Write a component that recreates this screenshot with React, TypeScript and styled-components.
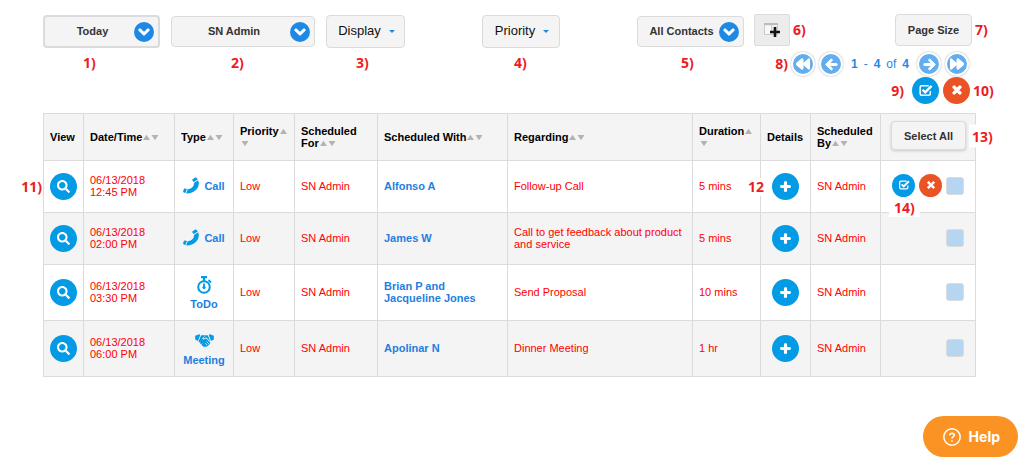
import React from 'react';
import styled, { createGlobalStyle } from 'styled-components';
import {
  FaArrowLeft,
  FaArrowRight,
  FaBackward,
  FaChevronDown,
  FaForward,
  FaPlus,
  FaSearch,
  FaTimes,
} from 'react-icons/fa';

const GlobalStyle = createGlobalStyle`
  *, *::before, *::after { box-sizing: border-box; }
  body {
    margin: 0;
    background: #fff;
    color: #000;
    font: 11px/12px "Liberation Sans", Arial, sans-serif;
  }
  button, select, input { font: inherit; margin: 0; }
  button { cursor: pointer; }
`;

const Page = styled.main`
  padding: 14px 42px 90px 43px;
`;

const Header = styled.header`
  display: flex;
  justify-content: space-between;
  align-items: flex-start;
  gap: 10px;
`;

const Filters = styled.div`
  display: flex;
  gap: 77px;
  padding-top: 1px;
`;

const FilterGroup = styled.div`
  display: flex;
  gap: 11px;
`;

const Slot = styled.div`
  display: flex;
  flex-direction: column;
  gap: 6px;
`;

const SlotControl = styled.div`
  display: flex;
  align-items: center;
  height: 33px;
`;

const Note = styled.span<{ $indent?: number }>`
  padding-left: ${(p) => p.$indent ?? 0}px;
  color: #ed1c24;
  font: bold 14px/18px "Open Sans", "Noto Sans", sans-serif;
  white-space: nowrap;
`;

const SideNote = styled(Note)<{ $side: 'left' | 'right'; $far?: boolean }>`
  position: absolute;
  top: 50%;
  ${(p) => (p.$side === 'left' ? 'right' : 'left')}: calc(100% + ${(p) => (p.$far ? 8 : 3)}px);
  transform: translateY(-50%);
  background: #fff;
`;

const Anchor = styled.span`
  position: relative;
  display: inline-flex;
`;

const SelectBox = styled.label<{ $width: number; $active?: boolean }>`
  position: relative;
  display: block;
  width: ${(p) => p.$width}px;
  height: ${(p) => (p.$active ? 33 : 31)}px;
  border: ${(p) => (p.$active ? 2 : 1)}px solid #dbdbdb;
  border-radius: 4px;
  background: #f4f4f4;
`;

const Select = styled.select`
  display: block;
  appearance: none;
  width: 100%;
  height: 100%;
  padding: 0 26px 2px 8px;
  border: 0;
  background: transparent;
  color: #333;
  font-weight: bold;
  text-align: center;
  text-align-last: center;
`;

const SelectArrow = styled.span`
  position: absolute;
  top: 50%;
  right: 4px;
  display: flex;
  align-items: center;
  justify-content: center;
  width: 20px;
  height: 20px;
  transform: translateY(-50%);
  border-radius: 50%;
  background: #1e88e5;
  color: #fff;
  pointer-events: none;
  svg { stroke: currentColor; stroke-width: 50px; }
`;

const ToolButton = styled.button<{ $width: number }>`
  display: flex;
  align-items: center;
  justify-content: center;
  gap: 8px;
  width: ${(p) => p.$width}px;
  height: 32px;
  padding: 0;
  border: 1px solid #dbdbdb;
  border-radius: 4px;
  background: #f4f4f4;
  color: #333;
  font-weight: bold;
`;

const MenuButton = styled(ToolButton)`
  height: 33px;
  padding: 0 0 1px 2px;
  color: #111;
  font-size: 13px;
  font-weight: normal;
`;

const Caret = styled.span`
  border: 3px solid transparent;
  border-top-color: #1e88e5;
  border-bottom: 0;
`;

const ColumnButton = styled(ToolButton)`
  border-radius: 2px;
  background: #ececec;
`;

const SelectAllButton = styled(ToolButton)`
  height: 29px;
  box-shadow: 0 1px 3px rgba(0, 0, 0, 0.18);
`;

const Side = styled.div`
  display: flex;
  flex-direction: column;
  align-items: flex-end;
  width: 222px;
  padding-right: 4px;
`;

const SideTop = styled.div`
  display: flex;
  align-items: center;
  justify-content: space-between;
  width: 100%;
`;

const Pager = styled.nav`
  position: relative;
  display: flex;
  align-items: center;
  gap: 4px;
  margin: 6px 3px 0 0;
`;

const PagerButton = styled.button`
  display: flex;
  align-items: center;
  justify-content: center;
  width: 24px;
  height: 24px;
  padding: 0;
  border: 2px solid #fff;
  border-radius: 50%;
  background: #64aeee;
  color: #fff;
  box-shadow: 0 0 2px rgba(0, 0, 0, 0.35);
  svg { flex: none; stroke: currentColor; stroke-width: 36px; }
`;

const PagerText = styled.span`
  display: flex;
  justify-content: space-between;
  width: 58px;
  margin: 0 4px;
  color: #1e88e5;
  font-size: 12px;
`;

const Actions = styled.div`
  display: flex;
  gap: 4px;
  margin: 1px 2px 9px 0;
`;

const RoundButton = styled.button<{ $color?: string; $size?: number }>`
  display: inline-flex;
  align-items: center;
  justify-content: center;
  width: ${(p) => p.$size ?? 27}px;
  height: ${(p) => p.$size ?? 27}px;
  padding: 0 0 1px;
  border: 0;
  border-radius: 50%;
  background: ${(p) => p.$color ?? '#039be5'};
  color: #fff;
`;

const HeavyIcon = styled.span`
  display: flex;
  svg { overflow: visible; stroke: currentColor; stroke-width: 50px; }
`;

const Table = styled.table`
  width: 100%;
  table-layout: fixed;
  border-collapse: collapse;
`;

const Row = styled.tr<{ $height: number; $shaded?: boolean }>`
  height: ${(p) => p.$height}px;
  background: ${(p) => (p.$shaded ? '#f4f4f4' : '#fff')};
`;

const HeadCell = styled.th`
  position: relative;
  padding: 0 6px;
  border: 1px solid #dbdbdb;
  text-align: left;
`;

const ToolsHeadCell = styled(HeadCell)`
  padding: 0 9px 3px 10px;
`;

const Cell = styled.td`
  position: relative;
  padding: 0 6px 2px;
  border: 1px solid #dbdbdb;
  color: #f00;
`;

const IconCell = styled(Cell)`
  padding: 0 6px;
  text-align: center;
`;

const ItemLink = styled.a`
  color: #1e7fdf;
  font-weight: bold;
  text-decoration: none;
`;

const TypeLink = styled(ItemLink)<{ $stacked: boolean }>`
  display: flex;
  flex-direction: ${(p) => (p.$stacked ? 'column' : 'row')};
  align-items: center;
  justify-content: center;
  gap: 4px;
  padding-top: ${(p) => (p.$stacked ? 2 : 0)}px;
  svg { color: #039be5; }
`;

const RowTools = styled.div`
  display: flex;
  align-items: center;
  justify-content: flex-end;
  gap: 4px;
  padding-right: 5px;
`;

const Tick = styled.input`
  appearance: none;
  width: 18px;
  height: 18px;
  border: 1px solid #dbdbdb;
  border-radius: 3px;
  background: #b6d5f1;
`;

const UnderNote = styled(Note)`
  position: absolute;
  top: calc(100% + 2px);
  left: -3px;
  padding: 0 5px;
  background: #fff;
`;

const HeadNote = styled(SideNote)`
  padding: 0 4px 0 3px;
  line-height: 23px;
`;

const HelpButton = styled.button`
  position: fixed;
  right: 0;
  bottom: 9px;
  display: flex;
  align-items: center;
  gap: 7px;
  height: 41px;
  padding: 0 18px 0 19px;
  border: 0;
  border-radius: 21px;
  background: #fb9324;
  color: #fff;
  font: bold 14px/20px Inter, sans-serif;
`;

const SortSvg = styled.svg`
  fill: #b3b3b3;
`;

const Sort = () => (
  <>
    <SortSvg width="8" height="7" viewBox="0 0 8 7" aria-hidden="true">
      <path d="M1 6 4.500 .800 8 6z" />
    </SortSvg>
    <wbr />
    <SortSvg width="10" height="7" viewBox="0 0 10 7" aria-hidden="true">
      <path d="M1.500 1h7L5 6.300z" />
    </SortSvg>
  </>
);

const CheckBoxIcon = ({ size = 14 }: { size?: number }) => (
  <svg width={size} height={size} viewBox="0 0 14 14" fill="none" stroke="#fff" aria-hidden="true">
    <path d="M11.500 7.500v2.600q0 1.400-1.400 1.400H3.400Q2 11.500 2 10.100V3.900q0-1.400 1.400-1.400H10" strokeWidth="1.400" />
    <path d="m4.300 6.300 2.400 2.400 6-6" strokeWidth="2.300" />
  </svg>
);

const PhoneIcon = () => (
  <svg width="17" height="17" viewBox="0 0 17 17" fill="currentColor" aria-hidden="true">
    <path d="M9.300 2.500 12.200.600q1-.600 1.600.400l.9 1.500-4 2.600-1.200-1.500q-.6-.7-.2-1.100z" />
    <path d="m11.200 5.800 4-2.500q1.500 3 .100 6.300-2.300 4.900-7.800 6.400-2.300.6-4.300.3l1.500-4.100q2.300.1 4.100-1.400 2.300-1.900 2.400-5z" />
    <path d="m3.900 12.100-1.500 4-1.600-.5q-.9-.4-.6-1.500l.7-2.100q.3-.8 1.100-.5z" />
  </svg>
);

const StopwatchIcon = () => (
  <svg width="16" height="18" viewBox="0 0 16 18" fill="none" stroke="currentColor" aria-hidden="true">
    <circle cx="8" cy="11" r="5.800" strokeWidth="2" />
    <path d="M5 1.200h6M8 1v4.500" strokeWidth="2.200" />
    <path d="M8 7.500v4M12.500 4l2.500 2.500" strokeWidth="1.800" />
    <circle cx="8" cy="11.500" r="1.200" fill="currentColor" />
  </svg>
);

const HandshakeIcon = () => (
  <svg width="19" height="18" viewBox="0 -2 19 18" fill="currentColor" aria-hidden="true">
    <path d="M.2 1.800 4 .3 5.300 1 2.900 6.900.2 5.500z" />
    <path d="M18.800 1.800 15 .3 13.700 1l2.400 5.900 2.700-1.400z" />
    <path d="M6 1.500 8.800 1 10 1.700 7.200 4.200q.8 1.900 2.700.8l1-.7 4.300 4.200q.4 1-.6 1.300.1 1-1 1.200-.1 1-1.200 1-.4 1.100-1.500.6L9.700 13 7.500 12 3.500 7.500z" />
    <path d="m10.700 1 2.200.4 2.400 6-4.200-4.200-1.900 1.200q-.5.200-.8-.3z" />
    <path d="m10.200 9.300 2 1.900M11.700 7.700l2.100 2.100M4 9.300l1.300-1.500M5.700 11l1.400-1.500" stroke="#f4f4f4" strokeWidth=".8" />
  </svg>
);

const AddColumnIcon = () => (
  <svg width="18" height="17" viewBox="0 0 18 17" fill="none" aria-hidden="true">
    <path d="M1.500 1.500h13v11h-13zM8.500 3v9" stroke="#c9c9c9" />
    <path d="M1 2h14" stroke="#bdbdbd" strokeWidth="2" />
    <path d="M2 4h6v8H2z" fill="#f8f8f8" />
    <path d="M12 5v10M7 10h10" stroke="#111" strokeWidth="2.600" />
  </svg>
);

const HelpIcon = () => (
  <svg width="20" height="20" viewBox="0 0 20 20" fill="none" stroke="#fff" aria-hidden="true">
    <circle cx="10" cy="10" r="8.200" strokeWidth="1.500" />
    <path d="M7.800 8.200q.1-2 2.200-2 2.200.1 2.200 1.900 0 1-1.100 1.700Q10 10.500 10 11.600" strokeWidth="1.600" />
    <circle cx="10" cy="14" r=".6" fill="#fff" strokeWidth=".6" />
  </svg>
);

type Kind = 'Call' | 'ToDo' | 'Meeting';

const kindIcons: Record<Kind, React.ReactNode> = {
  Call: <PhoneIcon />,
  ToDo: <StopwatchIcon />,
  Meeting: <HandshakeIcon />,
};

interface Activity {
  date: string;
  time: string;
  kind: Kind;
  contact: string;
  regarding: string;
  duration: string;
}

const activities: Activity[] = [
  { date: '06/13/2018', time: '12:45 PM', kind: 'Call', contact: 'Alfonso A', regarding: 'Follow-up Call', duration: '5 mins' },
  { date: '06/13/2018', time: '02:00 PM', kind: 'Call', contact: 'James W', regarding: 'Call to get feedback about product and service', duration: '5 mins' },
  { date: '06/13/2018', time: '03:30 PM', kind: 'ToDo', contact: 'Brian P and Jacqueline Jones', regarding: 'Send Proposal', duration: '10 mins' },
  { date: '06/13/2018', time: '06:00 PM', kind: 'Meeting', contact: 'Apolinar N', regarding: 'Dinner Meeting', duration: '1 hr' },
];

const columns: { label: string; width?: number; sortable?: boolean }[] = [
  { label: 'View', width: 40 },
  { label: 'Date/Time', width: 91, sortable: true },
  { label: 'Type', width: 59, sortable: true },
  { label: 'Priority', width: 61, sortable: true },
  { label: 'Scheduled For', width: 83, sortable: true },
  { label: 'Scheduled With', width: 130, sortable: true },
  { label: 'Regarding', sortable: true },
  { label: 'Duration', width: 68, sortable: true },
  { label: 'Details', width: 50 },
  { label: 'Scheduled By', width: 70, sortable: true },
];

const Dropdown = ({ label, value, width, active }: { label: string; value: string; width: number; active?: boolean }) => (
  <SelectBox $width={width} $active={active}>
    <Select aria-label={label} defaultValue={value}>
      <option>{value}</option>
    </Select>
    <SelectArrow>
      <FaChevronDown size={12} />
    </SelectArrow>
  </SelectBox>
);

export default function App() {
  return (
    <Page>
      <GlobalStyle />
      <Header>
        <Filters>
          <FilterGroup>
            <Slot>
              <SlotControl><Dropdown label="Period" value="Today" width={117} active /></SlotControl>
              <Note $indent={40}>1)</Note>
            </Slot>
            <Slot>
              <SlotControl><Dropdown label="User" value="SN Admin" width={144} /></SlotControl>
              <Note $indent={60}>2)</Note>
            </Slot>
            <Slot>
              <SlotControl>
                <MenuButton $width={79} aria-haspopup="menu">Display<Caret /></MenuButton>
              </SlotControl>
              <Note $indent={30}>3)</Note>
            </Slot>
          </FilterGroup>
          <Slot>
            <SlotControl>
              <MenuButton $width={78} aria-haspopup="menu">Priority<Caret /></MenuButton>
            </SlotControl>
            <Note $indent={32}>4)</Note>
          </Slot>
          <Slot>
            <SlotControl><Dropdown label="Contacts" value="All Contacts" width={107} /></SlotControl>
            <Note $indent={44}>5)</Note>
          </Slot>
        </Filters>
        <Side>
          <SideTop>
            <Anchor>
              <ColumnButton $width={36} aria-label="Add column"><AddColumnIcon /></ColumnButton>
              <SideNote $side="right">6)</SideNote>
            </Anchor>
            <Anchor>
              <ToolButton $width={77}>Page Size</ToolButton>
              <SideNote $side="right">7)</SideNote>
            </Anchor>
          </SideTop>
          <Pager aria-label="Pages">
            <SideNote $side="left">8)</SideNote>
            <PagerButton aria-label="First page"><FaBackward size={14} /></PagerButton>
            <PagerButton aria-label="Previous page"><FaArrowLeft size={13} /></PagerButton>
            <PagerText><b>1</b><span>-</span><b>4</b><span>of</span><b>4</b></PagerText>
            <PagerButton aria-label="Next page"><FaArrowRight size={13} /></PagerButton>
            <PagerButton aria-label="Last page"><FaForward size={14} /></PagerButton>
          </Pager>
          <Actions>
            <Anchor>
              <SideNote $side="left" $far>9)</SideNote>
              <RoundButton aria-label="Complete selected"><CheckBoxIcon size={15} /></RoundButton>
            </Anchor>
            <Anchor>
              <RoundButton $color="#e95325" aria-label="Delete selected">
                <HeavyIcon><FaTimes size={12} /></HeavyIcon>
              </RoundButton>
              <SideNote $side="right">10)</SideNote>
            </Anchor>
          </Actions>
        </Side>
      </Header>

      <Table>
        <colgroup>
          {columns.map((c) => <col key={c.label} width={c.width} />)}
          <col width={95} />
        </colgroup>
        <thead>
          <Row $height={47} $shaded>
            {columns.map((c) => (
              <HeadCell key={c.label} scope="col">
                {c.label}
                {c.sortable && <Sort />}
              </HeadCell>
            ))}
            <ToolsHeadCell scope="col">
              <Anchor>
                <SelectAllButton $width={75}>Select All</SelectAllButton>
                <HeadNote $side="right">13)</HeadNote>
              </Anchor>
            </ToolsHeadCell>
          </Row>
        </thead>
        <tbody>
          {activities.map((a, i) => (
            <Row key={a.time} $height={a.kind === 'Call' ? 52 : 56} $shaded={i % 2 === 1}>
              <IconCell>
                <Anchor>
                  {i === 0 && <SideNote $side="left" $far>11)</SideNote>}
                  <RoundButton aria-label={`View ${a.regarding}`}>
                    <FaSearch size={13} />
                  </RoundButton>
                </Anchor>
              </IconCell>
              <Cell>{a.date}<br />{a.time}</Cell>
              <Cell>
                <TypeLink href="#" $stacked={a.kind !== 'Call'}>
                  {kindIcons[a.kind]}
                  {a.kind}
                </TypeLink>
              </Cell>
              <Cell>Low</Cell>
              <Cell>SN Admin</Cell>
              <Cell><ItemLink href="#">{a.contact}</ItemLink></Cell>
              <Cell>{a.regarding}</Cell>
              <Cell>{a.duration}</Cell>
              <IconCell>
                <Anchor>
                  {i === 0 && <SideNote $side="left" $far>12</SideNote>}
                  <RoundButton aria-label={`Details of ${a.regarding}`}>
                    <HeavyIcon><FaPlus size={11} /></HeavyIcon>
                  </RoundButton>
                </Anchor>
              </IconCell>
              <Cell>SN Admin</Cell>
              <Cell>
                <RowTools>
                  {i === 0 && (
                    <>
                      <Anchor>
                        <RoundButton $size={23} aria-label="Complete"><CheckBoxIcon size={12} /></RoundButton>
                        <UnderNote>14)</UnderNote>
                      </Anchor>
                      <RoundButton $size={23} $color="#e95325" aria-label="Delete">
                        <HeavyIcon><FaTimes size={10} /></HeavyIcon>
                      </RoundButton>
                    </>
                  )}
                  <Tick type="checkbox" aria-label={`Select ${a.regarding}`} />
                </RowTools>
              </Cell>
            </Row>
          ))}
        </tbody>
      </Table>

      <HelpButton><HelpIcon />Help</HelpButton>
    </Page>
  );
}
